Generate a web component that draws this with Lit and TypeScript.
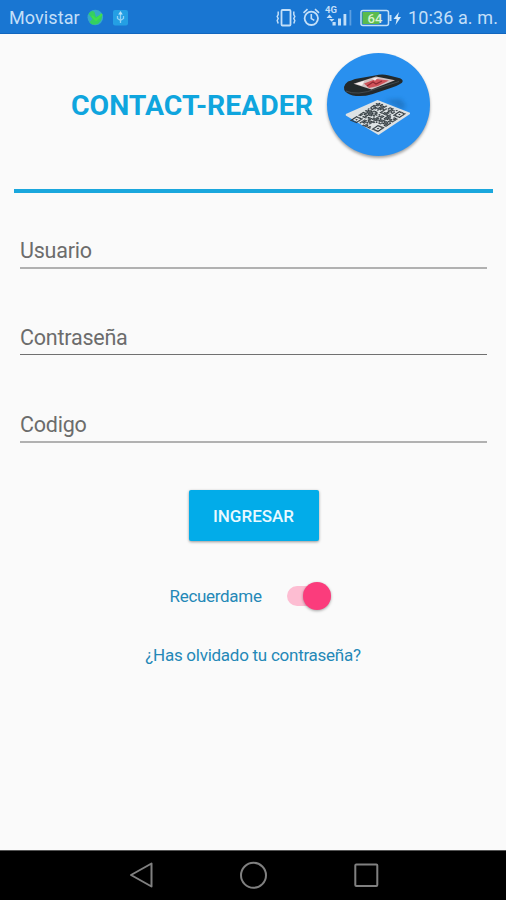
import { LitElement, html, css, svg } from "lit";
import { customElement, property } from "lit/decorators.js";

/** Cells of the printed code: three finder squares, the rest from a fixed sequence. */
function codeCells(size: number): Array<[number, number]> {
  const cells: Array<[number, number]> = [];
  let seed = 41;
  const finder = (x: number, y: number) => {
    const r = Math.max(Math.abs(x - 2), Math.abs(y - 2));
    return r !== 1 && r < 3;
  };
  for (let y = 0; y < size; y++) {
    for (let x = 0; x < size; x++) {
      seed = (seed * 1103515245 + 12345) % 2147483648;
      const fx = x < 6 ? x : size - 1 - x;
      const fy = y < 6 ? y : size - 1 - y;
      const corner = fx < 6 && fy < 6 && !(x < 6 && y < 6);
      if (corner ? finder(fx, fy) : seed / 2147483648 > 0.38) cells.push([x, y]);
    }
  }
  return cells;
}

@customElement("status-bar")
class StatusBar extends LitElement {
  static styles = css`
    :host {
      display: flex;
      align-items: center;
      height: 34px;
      box-sizing: border-box;
      padding: 2px 8px 0 9px;
      background: #1976d2;
      border-bottom: 1px solid #1266be;
      color: #c3dff8;
      font-size: 18px;
      white-space: nowrap;
    }
    .carrier { width: 78px; letter-spacing: 0.1px; }
    .notices { flex: 1; height: 32px; }
    .system { width: 132px; height: 32px; }
    .clock { letter-spacing: 0.1px; }
    svg { display: block; }
    .tiny { font: 700 9.5px Roboto, sans-serif; fill: #c3dff8; }
    .level { font: 500 13px Roboto, sans-serif; fill: #d9f3cf; }
  `;
  render() {
    return html`
      <span class="carrier">Movistar</span>
      <svg class="notices" viewBox="87 2 180 32" preserveAspectRatio="xMinYMin meet">
        <circle cx="95.3" cy="17.5" r="7.8" fill="#35a8c9" />
        <path d="M88.5 14q3-5 6-2l1.5 5 6-3q1 5-3.5 9.5-7 3-9-1.500l3-3z" fill="#34cf62" />
        <path d="M92 16l4 4 6-6" fill="none" stroke="#3fe04a" stroke-width="2" />
        <rect x="113" y="10" width="15" height="15.5" rx="2" fill="#249fe4" />
        <path d="M120.5 23v-10m-3 3v2.5l3 2 3-2v-2.5" fill="none" stroke="#91d0f5" stroke-width="1.3" />
        <path d="M120.5 11l2.3 3.5h-4.6z" fill="#b9e1f8" />
      </svg>
      <svg class="system" viewBox="276 2 132 32">
        <g fill="none" stroke="#c3dff8" stroke-width="1.8">
          <rect x="281.5" y="10" width="9" height="15.5" rx="1" />
          <path d="M278.2 11.5v3l-1 2 1 2-1 2 1 3M293.8 11.5v3l1 2-1 2 1 2-1 3" stroke-width="1.5" />
          <circle cx="311.3" cy="18.3" r="6.7" />
          <path d="M311.3 14v4.6l3 1.8M303.5 12.8l4-3.6M319 12.8l-4-3.6" stroke-width="1.6" />
        </g>
        <text class="tiny" x="325" y="13">4G</text>
        <g fill="#c3dff8">
          <path d="M326.5 18l3-3.5 3 3.5zM329 19h5.5l-2.7 2.7z" />
          <rect x="332.5" y="22" width="3.2" height="3.5" />
          <rect x="338" y="18.5" width="3" height="7" />
          <rect x="343.5" y="14" width="2.8" height="11.5" />
          <rect x="349.5" y="10" width="1.8" height="15.5" opacity=".4" />
        </g>
        <rect x="361" y="10.5" width="27.5" height="15" rx="2" fill="none" stroke="#c3dff8" stroke-width="1.5" />
        <rect x="362.5" y="12" width="17" height="12" fill="#5bbb4d" />
        <path d="M389.5 15h2v6h-2z" fill="#c3dff8" />
        <text class="level" x="367.5" y="22.6">64</text>
        <path d="M399 12l-5.5 7h3.2l-1.2 6 5.5-8h-3.2z" fill="#d5eafa" />
      </svg>
      <span class="clock">10:36 a. m.</span>
    `;
  }
}

@customElement("app-emblem")
class AppEmblem extends LitElement {
  static styles = css`
    :host {
      display: block;
      width: 103px;
      height: 103px;
      border-radius: 50%;
      background: #2990ef;
      box-shadow: 0 2px 3px rgba(0, 0, 0, 0.35);
    }
    svg { display: block; }
  `;
  render() {
    const n = 21;
    return html`
      <svg width="103" height="103" viewBox="327 53 103 103">
        <defs>
          <filter id="soft" x="-30%" y="-60%" width="160%" height="220%">
            <feGaussianBlur stdDeviation="2" />
          </filter>
        </defs>
        <path d="M385 100l16-1 5 7-4 4z" fill="#175d9e" opacity=".45" filter="url(#soft)" />
        <path d="M377.5 100L410 112.7v1.2L378.5 135 345.8 115.4v-1.3z" fill="#dde2e4" />
        <g transform="matrix(1.34 .55 -1.34 .87 378 102.2)">
          ${codeCells(n).map(([x, y]) => svg`<rect x=${x} y=${y} width="1" height="1" fill="#2d363b" />`)}
        </g>
        <path d="M344 87q.5-3 4-5.5 3-1 7-2.5l20-3.5q7-2 13-.3l12 3q4 1.8 2 4.5-4 3-15 6.5l-15 5q-8 2.5-16 1.7-7-.8-10.5-4.2-1.8-2-1.500-4.700z" fill="#23292b" />
        <path d="M346 91q5 2.5 13 2 8-.5 18-4.5l22-7" fill="none" stroke="#4b5358" stroke-width=".8" />
        <path d="M353.5 83.7l22.5-7.2 19 3.7-23.5 9.3z" fill="#cfc0c1" />
        <path d="M364 83.5l12-4.5 13 1.5-11 5.5-9 2z" fill="#cf5259" />
        <path d="M355.5 83.7l9-3-2.5 5zM372 78.5l6-.8-3 3z" fill="#f4efef" />
        <path d="M367 86l6-4 3 2 6-3" fill="none" stroke="#8c2832" stroke-width="1.1" />
      </svg>
    `;
  }
}

@customElement("line-field")
class LineField extends LitElement {
  @property() label = "";
  @property() tone = "light";
  static styles = css`
    :host { display: block; height: 87px; }
    .box {
      height: 32px;
      box-sizing: border-box;
      color: #6c6c6c;
      font-size: 21.5px;
      letter-spacing: -0.22px;
      line-height: 28px;
      border-bottom: 2px solid #b1b1b1;
    }
    .dark { height: 31px; border-bottom: 1px solid #707070; }
  `;
  render() {
    return html`<div class="box ${this.tone}">${this.label}</div>`;
  }
}

@customElement("nav-bar")
class NavBar extends LitElement {
  static styles = css`
    :host {
      display: block;
      height: 50px;
      box-sizing: border-box;
      background: #000;
      border-top: 1px solid #555;
    }
    svg { display: block; }
  `;
  render() {
    return html`
      <svg width="506" height="49" viewBox="0 851 506 49" fill="none" stroke="#808080" stroke-width="2" stroke-linejoin="round">
        <path d="M151.5 863.5v23L131 875z" />
        <circle cx="253.5" cy="875.3" r="12.5" />
        <rect x="355.3" y="864.5" width="22" height="21.5" rx="1" />
      </svg>
    `;
  }
}

@customElement("app-root")
class AppRoot extends LitElement {
  static styles = css`
    :host {
      display: flex;
      flex-direction: column;
      width: 506px;
      height: 900px;
      overflow: hidden;
      background: #fafafa;
      font-family: Roboto, "Liberation Sans", sans-serif;
    }
    main { flex: 1; }
    header {
      display: flex;
      gap: 14px;
      height: 159px;
      box-sizing: border-box;
      margin: 0 13px 0 14px;
      padding: 19px 0 0 57px;
      border-bottom: 4px solid #1aa7dd;
    }
    h1 {
      width: 242px;
      margin: 0;
      color: #0fa5de;
      font-size: 28.4px;
      font-weight: 700;
      line-height: 105px;
      white-space: nowrap;
    }
    .fields { padding: 44px 19px 0 20px; }
    .actions {
      display: flex;
      flex-direction: column;
      align-items: center;
      color: #2488b7;
      font-size: 17px;
      letter-spacing: -0.26px;
    }
    .submit {
      width: 130px;
      height: 51px;
      margin: -8px 0 0 1px;
      padding: 0;
      border: 0;
      border-radius: 2px;
      background: #02ace9;
      color: #e9f9ff;
      font: 500 17px Roboto, sans-serif;
      box-shadow: 0 1px 3px rgba(0, 0, 0, 0.4);
    }
    .remember {
      display: flex;
      align-items: center;
      gap: 24px;
      height: 30px;
      margin: 40px 0 0 -6px;
    }
    .name { width: 93px; white-space: nowrap; letter-spacing: -0.3px; }
    .track {
      display: flex;
      align-items: center;
      justify-content: flex-end;
      width: 44px;
      height: 20px;
      border-radius: 10px;
      background: #fdbdd2;
    }
    .thumb {
      width: 28px;
      height: 28px;
      border-radius: 50%;
      background: #fb3c7c;
      box-shadow: 0 1px 3px rgba(0, 0, 0, 0.35);
    }
    .forgot { margin-top: 34px; line-height: 20px; white-space: nowrap; }
  `;
  render() {
    return html`
      <status-bar></status-bar>
      <main>
        <header>
          <h1>CONTACT-READER</h1>
          <app-emblem></app-emblem>
        </header>
        <div class="fields">
          <line-field label="Usuario"></line-field>
          <line-field label="Contraseña" tone="dark"></line-field>
          <line-field label="Codigo"></line-field>
        </div>
        <div class="actions">
          <button class="submit">INGRESAR</button>
          <div class="remember">
            <span class="name">Recuerdame</span>
            <span class="track"><span class="thumb"></span></span>
          </div>
          <span class="forgot">¿Has olvidado tu contraseña?</span>
        </div>
      </main>
      <nav-bar></nav-bar>
    `;
  }
}
